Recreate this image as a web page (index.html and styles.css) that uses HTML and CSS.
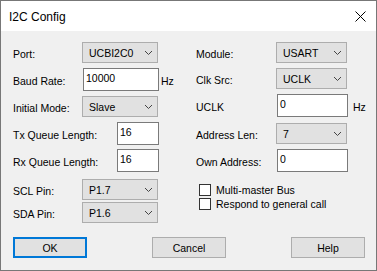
FILE: index.html
```html
<!DOCTYPE html>
<html lang="en">
<head>
  <meta charset="UTF-8" />
  <title>I2C Config</title>
  <link rel="stylesheet" href="styles.css">
</head>
<body>
  <div class="window">
    <!-- Title bar -->
    <div class="titlebar">
      <span class="title">I2C Config</span>
      <svg class="close" width="11" height="11" viewBox="0 0 11 11">
        <line x1="0.5" y1="0.5" x2="10.5" y2="10.5" stroke="#000" stroke-width="1" />
        <line x1="10.5" y1="0.5" x2="0.5" y2="10.5" stroke="#000" stroke-width="1" />
      </svg>
    </div>

    <div class="body">
      <div class="columns">
        <!-- Left column -->
        <div class="col col-left">
          <div class="field">
            <span class="label">Port:</span>
            <div class="combo"><span>UCBI2C0</span><svg width="7" height="4"><polyline points="0,0 3.5,3.5 7,0" fill="none" stroke="#444" /></svg></div>
          </div>
          <div class="field">
            <span class="label">Baud Rate:</span>
            <div class="edit">10000</div>
            <span class="unit">Hz</span>
          </div>
          <div class="field">
            <span class="label">Initial Mode:</span>
            <div class="combo"><span>Slave</span><svg width="7" height="4"><polyline points="0,0 3.5,3.5 7,0" fill="none" stroke="#444" /></svg></div>
          </div>
          <div class="field">
            <span class="label label-wide">Tx Queue Length:</span>
            <div class="edit edit-small">16</div>
          </div>
          <div class="field">
            <span class="label label-wide">Rx Queue Length:</span>
            <div class="edit edit-small">16</div>
          </div>
          <div class="field">
            <span class="label">SCL Pin:</span>
            <div class="combo"><span>P1.7</span><svg width="7" height="4"><polyline points="0,0 3.5,3.5 7,0" fill="none" stroke="#444" /></svg></div>
          </div>
          <div class="field">
            <span class="label">SDA Pin:</span>
            <div class="combo"><span>P1.6</span><svg width="7" height="4"><polyline points="0,0 3.5,3.5 7,0" fill="none" stroke="#444" /></svg></div>
          </div>
        </div>

        <!-- Right column -->
        <div class="col col-right">
          <div class="field">
            <span class="label">Module:</span>
            <div class="combo"><span>USART</span><svg width="7" height="4"><polyline points="0,0 3.5,3.5 7,0" fill="none" stroke="#444" /></svg></div>
          </div>
          <div class="field">
            <span class="label">Clk Src:</span>
            <div class="combo"><span>UCLK</span><svg width="7" height="4"><polyline points="0,0 3.5,3.5 7,0" fill="none" stroke="#444" /></svg></div>
          </div>
          <div class="field">
            <span class="label">UCLK</span>
            <div class="edit">0</div>
            <span class="unit">Hz</span>
          </div>
          <div class="field">
            <span class="label">Address Len:</span>
            <div class="combo"><span>7</span><svg width="7" height="4"><polyline points="0,0 3.5,3.5 7,0" fill="none" stroke="#444" /></svg></div>
          </div>
          <div class="field">
            <span class="label">Own Address:</span>
            <div class="edit">0</div>
          </div>
          <div class="check"><span class="box"></span>Multi-master Bus</div>
          <div class="check"><span class="box"></span>Respond to general call</div>
        </div>
      </div>

      <div class="buttons">
        <div class="btn btn-default">OK</div>
        <div class="btn">Cancel</div>
        <div class="btn">Help</div>
      </div>
    </div>
  </div>
</body>
</html>
```

FILE: styles.css
```css
* { box-sizing: border-box; }
body {
  margin: 0;
  font-family: 'Liberation Sans', Arial, sans-serif;
  font-size: 10.5px;
  color: #000;
}
.window {
  width: 377px;
  height: 271px;
  border: 1px solid #777;
  background: #f0f0f0;
  display: flex;
  flex-direction: column;
}
.titlebar {
  height: 30px;
  background: #fff;
  display: flex;
  align-items: center;
  padding: 0 10px 0 8px;
}
.title {
  font-size: 12px;
  margin-top: 1px;
}
.close {
  margin-left: auto;
}
.body {
  padding: 11px 11px 0 12px;
}
.columns {
  display: grid;
  grid-template-columns: 183px 1fr;
}
.col {
  display: grid;
  align-items: start;
}
.col-left {
  grid-template-rows: 26px 28px 26px 27px 30px 23px 21px;
}
.col-right {
  grid-template-rows: 26px 26px 29px 26px 34px 14px 14px;
}
.field {
  display: flex;
  align-items: center;
}
.label {
  width: 69px;
  flex-shrink: 0;
  padding-top: 2px;
}
.label-wide { width: 104px; }
.col-right .label { width: 80px; }
.combo {
  width: 76px;
  height: 21px;
  background: #e1e1e1;
  border: 1px solid #adadad;
  display: flex;
  align-items: center;
  padding: 0 5px 0 6px;
}
.combo svg { margin-left: auto; }
.col-right .combo { width: 71px; }
.edit {
  width: 76px;
  height: 23px;
  background: #fff;
  border: 1px solid #7a7a7a;
  margin-left: 1px;
  padding: 2px 0 0 2px;
  line-height: 14px;
}
.col-right .edit { width: 71px; }
.edit-small { width: 42px; margin-left: 0; }
.unit {
  margin-left: 2px;
  padding-top: 2px;
}
.col-right .unit { margin-left: 5px; }
.check {
  display: flex;
  align-items: center;
  height: 13px;
  padding-left: 3px;
}
.check .box {
  width: 12px;
  height: 12px;
  border: 1px solid #333;
  background: #fff;
  margin-right: 5px;
}
.buttons {
  display: flex;
  justify-content: space-between;
  margin-top: 14px;
}
.btn {
  width: 74px;
  height: 21px;
  background: #e1e1e1;
  border: 1px solid #adadad;
  display: flex;
  align-items: center;
  justify-content: center;
}
.btn-default { border: 2px solid #0078d7; }
```
